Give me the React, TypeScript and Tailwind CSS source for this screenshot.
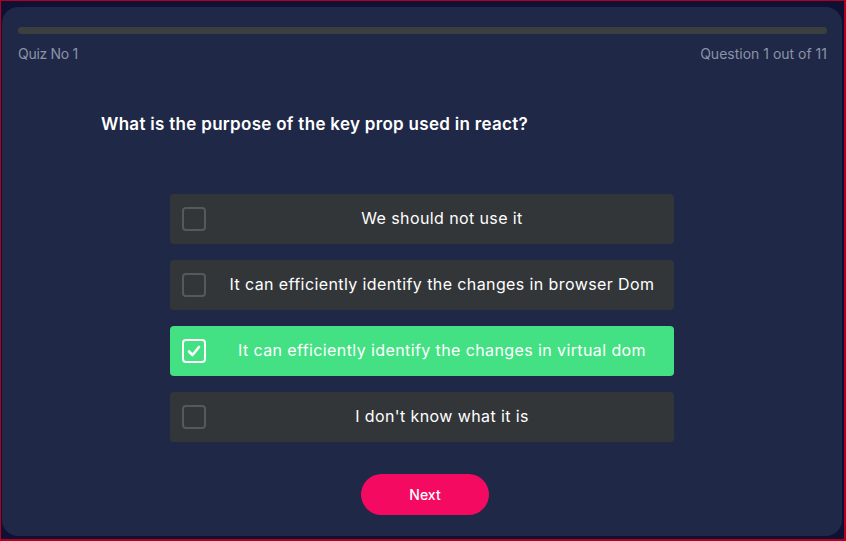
import React from "react";

const options = [
  { text: "We should not use it", selected: false },
  { text: "It can efficiently identify the changes in browser Dom", selected: false },
  { text: "It can efficiently identify the changes in virtual dom", selected: true },
  { text: "I don't know what it is", selected: false },
];

export default function App() {
  return (
    <div
      className="w-[846px] h-[541px] bg-[#0e1034] border-l border-t border-r-2 border-b-2 border-[#b3001e] pt-[6px] pl-[1px] pr-[2px] pb-[3px] flex"
      style={{ fontFamily: "Inter, 'Noto Sans', sans-serif" }}
    >
      <div className="flex-1 rounded-[16px] bg-[#1f2847] pl-[16px] pr-[15px] pt-[20px] flex flex-col">
        <div className="h-[7px] rounded-full bg-[#3b403f]" />
        <div className="flex justify-between mt-[10px] text-[14px] leading-[20px] text-[#8c93a8]">
          <span className="tracking-[-0.3px]">Quiz No 1</span>
          <span>Question 1 out of 11</span>
        </div>
        <div className="mt-[48px] pl-[83px] text-[17px] leading-[24px] font-semibold text-white tracking-[0.3px]">
          What is the purpose of the key prop used in react?
        </div>
        <div className="mt-[58px] flex flex-col items-center gap-[16px] pr-[2px]">
          {options.map((o) => (
            <div
              key={o.text}
              className={
                "w-[504px] h-[50px] rounded-[4px] flex items-center pl-[12px] " +
                (o.selected ? "bg-[#43e183]" : "bg-[#333638]")
              }
            >
              <div
                className={
                  "w-[24px] h-[24px] rounded-[4px] border-2 flex items-center justify-center shrink-0 " +
                  (o.selected ? "border-white" : "border-[#56595b]")
                }
              >
                {o.selected && (
                  <svg width="16" height="16" viewBox="0 0 16 16" fill="none">
                    <path d="M3 8.5 L6.5 12 L13 4" stroke="white" strokeWidth="2.6" strokeLinecap="round" strokeLinejoin="round" />
                  </svg>
                )}
              </div>
              <div className="flex-1 text-center text-[16px] leading-[22px] text-white tracking-[0.4px] mb-[3px] pl-[5px]">{o.text}</div>
            </div>
          ))}
        </div>
        <div className="mt-[32px] flex justify-center pl-[5px]">
          <button className="w-[128px] h-[41px] rounded-full bg-[#f50a62] text-white text-[14px] font-medium">
            Next
          </button>
        </div>
      </div>
    </div>
  );
}
